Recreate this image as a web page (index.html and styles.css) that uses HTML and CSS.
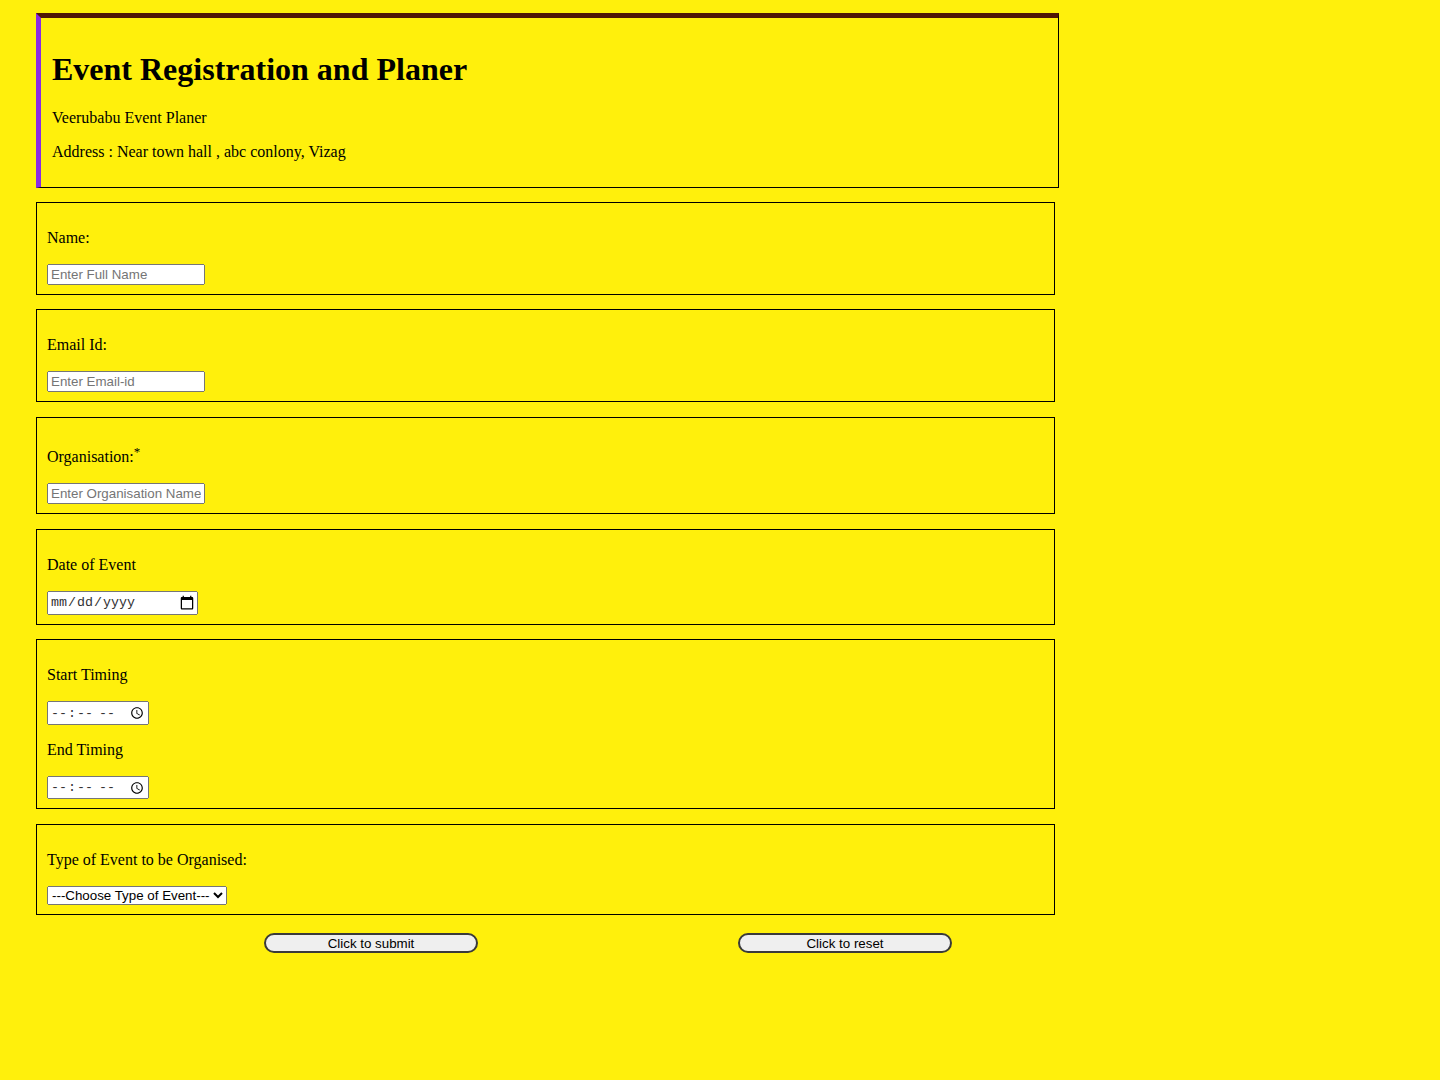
FILE: index.html
```html
<!DOCTYPE html>
<html lang="en">
<head>
<meta charset="utf-8">
<title>Event Registration and Planer</title>
<link rel="stylesheet" href="styles.css">
</head>
<body>
<div class="page">
  <header class="header">
    <h1 class="title">Event Registration and Planer</h1>
    <p class="info">Veerubabu Event Planer</p>
    <p class="info">Address : Near town hall , abc conlony, Vizag</p>
  </header>
  <form class="form">
    <div class="box">
      <p class="label">Name:</p>
      <input class="field text" type="text" placeholder="Enter Full Name">
    </div>
    <div class="box">
      <p class="label">Email Id:</p>
      <input class="field text" type="email" placeholder="Enter Email-id">
    </div>
    <div class="box">
      <p class="label label-sup">Organisation:<sup>*</sup></p>
      <input class="field text" type="text" placeholder="Enter Organisation Name">
    </div>
    <div class="box">
      <p class="label">Date of Event</p>
      <input class="field date" type="date">
    </div>
    <div class="box">
      <p class="label">Start Timing</p>
      <input class="field time" type="time">
      <p class="label">End Timing</p>
      <input class="field time" type="time">
    </div>
    <div class="box">
      <p class="label">Type of Event to be Organised:</p>
      <select class="field select">
        <option>---Choose Type of Event---</option>
        <option>Conference</option>
        <option>Wedding</option>
        <option>Birthday Party</option>
      </select>
    </div>
    <div class="actions">
      <button class="btn" type="submit">Click to submit</button>
      <button class="btn" type="reset">Click to reset</button>
    </div>
  </form>
</div>
</body>
</html>
```

FILE: styles.css
```css
html, body {
  margin: 0;
  padding: 0;
  background: #fff00c;
}
body {
  font-family: "Liberation Serif", "Times New Roman", serif;
  font-size: 16px;
  color: #000;
  min-height: 1080px;
}
.page {
  padding: 13px 36px 0 36px;
}
.header {
  box-sizing: border-box;
  width: 1023px;
  border-top: 5px solid #4f1605;
  border-left: 5px solid #8a2be2;
  border-right: 1px solid #000;
  border-bottom: 1px solid #000;
  padding: 11px 10px 10px 11px;
  margin-bottom: 14px;
}
.title {
  font-size: 32px;
  font-weight: bold;
  margin: 22.44px 0 20.44px;
}
.info {
  margin: 16px 0;
}
.box {
  box-sizing: border-box;
  width: 1019px;
  border: 1px solid #000;
  padding: 10px 10px 9px 10px;
  margin-bottom: 14.6px;
}
.label {
  margin: 16px 0 17px;
  line-height: 18px;
}
.label-sup {
  margin-top: 20px;
}
.label sup {
  line-height: 0;
  font-size: 13px;
}
.field {
  display: block;
  margin: 0;
}
.text {
  box-sizing: border-box;
  width: 158px;
  height: 21px;
  font-family: "Liberation Sans", Arial, sans-serif;
  font-size: 13.33px;
}
.date, .time {
  box-sizing: border-box;
  font-family: "Liberation Mono", "Courier New", monospace;
  font-size: 13.33px;
  color: #333;
}
.date {
  width: 151px;
  height: 24px;
}
.date::-webkit-calendar-picker-indicator {
  width: 16px;
  height: 16px;
  padding: 0;
  margin-right: 1px;
}
.time {
  width: 102px;
  height: 23.5px;
}
.select {
  height: 19px;
}
.actions {
  display: flex;
  gap: 260px;
  padding: 4px 0 0 228px;
}
.btn {
  width: 214px;
  height: 20px;
  border: 2px solid #3a3a3a;
  border-radius: 10px;
  background: #efefef;
  font-family: "Liberation Sans", Arial, sans-serif;
  font-size: 13.33px;
  padding: 0 6px;
  color: #000;
}
```
